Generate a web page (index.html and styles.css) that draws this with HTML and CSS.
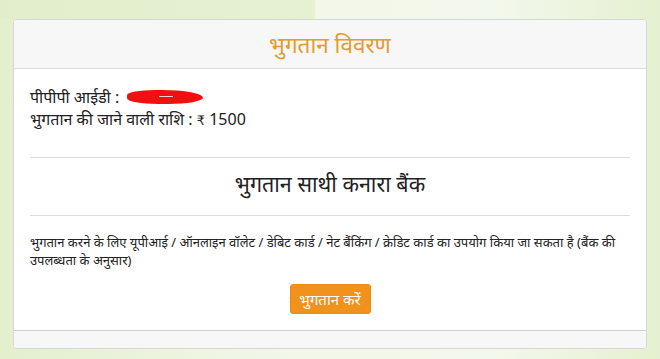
FILE: index.html
```html
<!DOCTYPE html>
<html lang="hi">
<head>
    <meta charset="UTF-8">
    <meta name="viewport" content="width=device-width, initial-scale=1.0">
    <title>भुगतान विवरण</title>
    <link rel="stylesheet" href="styles.css">
</head>
<body>
    <div class="page">
        <div class="card">
            <div class="card-header">
                <h3>भुगतान विवरण</h3>
            </div>
            <div class="card-body">
                <div class="info">
                    <div>पीपीपी आईडी : <span class="redacted"><span class="redacted-mark"></span></span></div>
                    <div>भुगतान की जाने वाली राशि : <span class="rupee">₹</span> 1500</div>
                </div>
                <hr>
                <h4 class="bank">भुगतान साथी कनारा बैंक</h4>
                <hr>
                <p class="note">भुगतान करने के लिए यूपीआई / ऑनलाइन वॉलेट / डेबिट कार्ड / नेट बैंकिंग / क्रेडिट कार्ड का उपयोग किया जा सकता है (बैंक की उपलब्धता के अनुसार)</p>
                <div class="actions">
                    <button class="pay-button">भुगतान करें</button>
                </div>
            </div>
            <div class="card-footer"></div>
        </div>
    </div>
</body>
</html>
```

FILE: styles.css
```css
* {
    margin: 0;
    padding: 0;
    box-sizing: border-box;
}
body {
    font-family: "Noto Sans", "Noto Sans Devanagari", "Lohit Devanagari", sans-serif;
    color: #222;
    background:
        linear-gradient(to right, #e2eecb 0, #e6f1d2 315px, transparent 315px) 0 0 / 100% 19px no-repeat,
        linear-gradient(to right, #e3efcd, #f1f7e8 40%, #f3f8ec 75%, #e5f0d0);
    min-height: 359px;
}
.page {
    padding: 19px 13px 12px 13px;
}
.card {
    background: #fff;
    border: 1px solid #d6d6d6;
    border-radius: 4px;
    overflow: hidden;
}
.card-header {
    background-color: #f7f7f7;
    border-bottom: 1px solid #dcdcdc;
    height: 49px;
    display: flex;
    align-items: center;
    justify-content: center;
}
.card-header h3 {
    font-size: 22.5px;
    font-weight: normal;
    color: #e49b2c;
}
.card-body {
    padding: 17px 16px 16px 16px;
}
.info {
    font-size: 16px;
    line-height: 22px;
}
.redacted {
    display: inline-block;
    vertical-align: middle;
    width: 76px;
    height: 14px;
    margin-left: 4px;
    background: #f01010;
    border-radius: 40% 60% 50% 45%;
    position: relative;
    margin-top: -4px;
}
.redacted-mark {
    position: absolute;
    left: 32px;
    top: 6px;
    width: 14px;
    height: 1px;
    background: rgba(255,255,255,0.8);
}
.rupee {
    font-family: "DejaVu Sans", sans-serif;
    font-size: 13px;
}
hr {
    border: none;
    border-top: 1px solid #ddd;
    margin-top: 25px;
}
.bank {
    font-size: 21.5px;
    font-weight: normal;
    text-align: center;
    line-height: 28px;
    margin: 12px 0 17px 0;
}
.bank + hr {
    margin-top: 0;
}
.note {
    font-size: 13px;
    line-height: 18px;
    margin-top: 17px;
}
.actions {
    text-align: center;
    margin-top: 15px;
}
.pay-button {
    font-family: inherit;
    font-size: 15px;
    color: #fff;
    background-color: #f0921c;
    border: 1px solid #ea8c14;
    border-radius: 3px;
    width: 81px;
    height: 30px;
    cursor: pointer;
}
.card-footer {
    background-color: #f7f7f7;
    border-top: 1px solid #cfcfcf;
    height: 18px;
}
```
